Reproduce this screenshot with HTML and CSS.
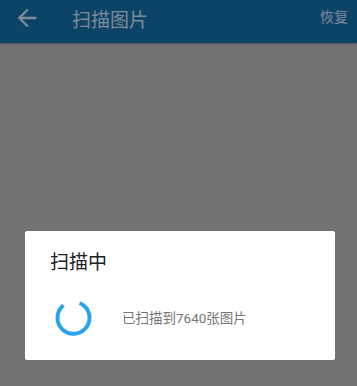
FILE: index.html
```html
<!DOCTYPE html>
<html lang="zh">
<head>
<meta charset="utf-8">
<link rel="stylesheet" href="styles.css">
</head>
<body>
<div class="app">
  <header class="toolbar">
    <svg class="back" width="28" height="28" viewBox="0 0 24 24"><path d="M20 11H7.83l5.59-5.59L12 4l-8 8 8 8 1.41-1.41L7.83 13H20v-2z" fill="currentColor"/></svg>
    <span class="title">扫描图片</span>
    <span class="action">恢复</span>
  </header>
  <main class="content">
    <div class="dialog">
      <div class="dialog-title">扫描中</div>
      <div class="dialog-body">
        <svg class="spinner" width="44" height="44" viewBox="0 0 44 44">
          <path d="M13.5 10.3 A16 16 0 1 0 29.6 8" fill="none" stroke="#29a3ec" stroke-width="4" stroke-linecap="butt"/>
        </svg>
        <span class="message">已扫描到7640张图片</span>
      </div>
    </div>
  </main>
</div>
</body>
</html>
```
FILE: styles.css
```css
html, body {
  margin: 0;
  padding: 0;
}
body {
  width: 357px;
  height: 386px;
  overflow: hidden;
  font-family: Roboto, "Noto Sans CJK SC", sans-serif;
  background: #737373;
}
.app {
  display: flex;
  flex-direction: column;
  height: 386px;
}
.toolbar {
  height: 43px;
  background: #0c4468;
  display: flex;
  align-items: center;
  color: #7f8c97;
  flex-shrink: 0;
  box-shadow: 0 1px 2px rgba(0,0,0,0.3);
}
.back {
  margin-left: 13px;
  margin-top: -8px;
  width: 28px;
  height: 28px;
}
.title {
  margin-left: 31px;
  font-size: 19px;
  margin-top: -7px;
}
.action {
  margin-left: auto;
  margin-right: 9px;
  font-size: 14px;
  margin-top: -11px;
}
.content {
  flex: 1;
  display: flex;
  flex-direction: column;
  justify-content: flex-end;
  padding: 0 22px 26px 25px;
}
.dialog {
  background: #fff;
  border-radius: 2px;
  height: 129px;
  box-sizing: border-box;
  padding: 20px 24px 0 25px;
}
.dialog-title {
  font-size: 19px;
  color: #212121;
  line-height: 24px;
}
.dialog-body {
  display: flex;
  align-items: center;
  margin-top: 20px;
}
.spinner {
  flex-shrink: 0;
}
.message {
  margin-left: 28px;
  font-size: 13.5px;
  color: #757575;
}
```
